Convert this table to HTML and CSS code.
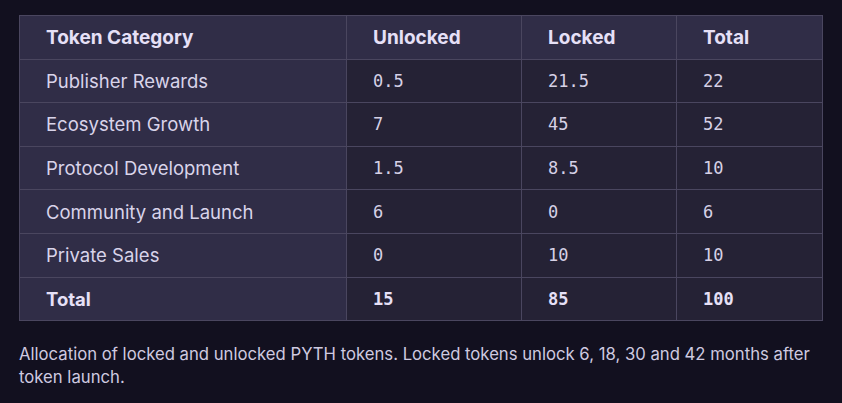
FILE: index.html
```html
<!DOCTYPE html>
<html>
<head>
<meta charset="utf-8">
<link rel="stylesheet" href="styles.css">
</head>
<body>
<figure class="figure">
  <table class="alloc">
    <thead>
      <tr><th class="c1">Token Category</th><th class="c2">Unlocked</th><th class="c3">Locked</th><th class="c4">Total</th></tr>
    </thead>
    <tbody>
      <tr><td class="cat">Publisher Rewards</td><td class="num">0.5</td><td class="num">21.5</td><td class="num">22</td></tr>
      <tr><td class="cat">Ecosystem Growth</td><td class="num">7</td><td class="num">45</td><td class="num">52</td></tr>
      <tr><td class="cat">Protocol Development</td><td class="num">1.5</td><td class="num">8.5</td><td class="num">10</td></tr>
      <tr><td class="cat">Community and Launch</td><td class="num">6</td><td class="num">0</td><td class="num">6</td></tr>
      <tr><td class="cat">Private Sales</td><td class="num">0</td><td class="num">10</td><td class="num">10</td></tr>
      <tr class="total"><td class="cat">Total</td><td class="num">15</td><td class="num">85</td><td class="num">100</td></tr>
    </tbody>
  </table>
  <figcaption class="caption">Allocation of locked and unlocked PYTH tokens. Locked tokens unlock 6, 18, 30 and 42 months after token launch.</figcaption>
</figure>
</body>
</html>
```
FILE: styles.css
```css
html, body {
  margin: 0;
  padding: 0;
  background: #12101f;
}
body {
  font-family: "Inter", "Open Sans", sans-serif;
  color: #e2ddf2;
}
.figure {
  margin: 0;
  padding: 15px 21px 0 19px;
}
.alloc {
  width: 803px;
  border-collapse: collapse;
  table-layout: fixed;
  border: 1px solid #4c4862;
}
.alloc th, .alloc td {
  border: 1px solid #4a465f;
  height: 43.6px;
  padding: 0 0 0 26px;
  text-align: left;
  box-sizing: border-box;
}
.alloc th {
  background: #302d47;
  font-weight: 700;
  font-size: 19px;
  color: #e6e0f7;
}
.c1 { width: 327px; }
.c2 { width: 175px; }
.c3 { width: 155px; }
.c4 { width: 146px; }
.cat {
  background: #302d47;
  font-size: 18.5px;
  font-weight: 400;
  color: #d9d4ea;
}
.num {
  background: #252235;
  font-family: "DejaVu Sans Mono", monospace;
  font-size: 17px;
  color: #d6d1e6;
}
.total .cat {
  font-weight: 700;
  color: #e6e0f7;
}
.total .num {
  font-weight: 700;
  color: #e6e0f7;
}
.caption {
  margin-top: 22px;
  font-size: 16.7px;
  line-height: 23px;
  color: #cfcae0;
}
```
